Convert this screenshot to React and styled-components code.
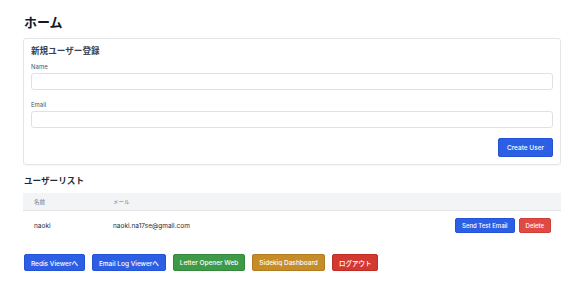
import React from "react";
import styled, { createGlobalStyle } from "styled-components";

const Global = createGlobalStyle`
  html, body { margin: 0; padding: 0; background: #fff; }
  body {
    font-family: "Inter", "Noto Sans CJK JP", sans-serif;
    color: #1f2937;
  }
  * { box-sizing: border-box; }
`;

const Page = styled.div`
  width: 586px;
  padding: 12px 25px 0 23px;
`;

const Title = styled.h1`
  margin: 0 0 6px 1px;
  font-size: 13px;
  line-height: 20px;
  font-weight: 700;
  color: #111827;
`;

const Card = styled.section`
  border: 1px solid #e3e5e8;
  border-radius: 3px;
  padding: 6px 7px 7px 7px;
  box-shadow: 0 1px 1px rgba(0,0,0,0.03);
`;

const CardTitle = styled.h2`
  margin: 0 0 5px 0;
  font-size: 8.6px;
  line-height: 13px;
  font-weight: 700;
  color: #374151;
`;

const Field = styled.div`
  display: flex;
  flex-direction: column;
  gap: 2px;
  margin-bottom: ${(p) => p.$mb || 0}px;
`;

const Label = styled.label`
  font-size: 6px;
  line-height: 8px;
  color: #4b5563;
`;

const Input = styled.input`
  height: 17px;
  width: 100%;
  border: 1px solid #dfe1e5;
  border-radius: 3px;
  padding: 0 5px;
  font-size: 7px;
  outline: none;
  background: #fff;
`;

const Actions = styled.div`
  display: flex;
  justify-content: flex-end;
  margin-top: ${(p) => p.$mt || 0}px;
`;

const colors = {
  blue: ["#2c5fe3", "#2452d6"],
  red: ["#d23a31", "#bf2c24"],
  redLight: ["#e04a45", "#cf3e39"],
  green: ["#3f9a48", "#34883d"],
  amber: ["#c58c27", "#b27b1f"],
};

const Button = styled.button`
  display: inline-flex;
  align-items: center;
  justify-content: center;
  height: ${(p) => p.$h || 17}px;
  padding: 0 ${(p) => p.$px || 6}px;
  font-family: inherit;
  font-size: ${(p) => p.$fs || 6.5}px;
  font-weight: 500;
  color: #fff;
  background: ${(p) => colors[p.$color][0]};
  border: 1px solid ${(p) => colors[p.$color][1]};
  border-radius: 2px;
  white-space: nowrap;
  cursor: pointer;
`;

const SectionTitle = styled.h2`
  margin: 10px 0 5px 1px;
  font-size: 8.6px;
  line-height: 13px;
  font-weight: 700;
  color: #1f2937;
`;

const Table = styled.div`
  width: 100%;
`;

const Row = styled.div`
  display: grid;
  grid-template-columns: 79px 1fr auto;
  align-items: center;
  height: ${(p) => (p.$head ? 18 : 30)}px;
  padding: 0 10px 0 11px;
  background: ${(p) => (p.$head ? "#f3f4f6" : "#fff")};
  border-bottom: 1px solid ${(p) => (p.$head ? "#e2e4e8" : "transparent")};
  font-size: ${(p) => (p.$head ? 5.5 : 6.5)}px;
  color: ${(p) => (p.$head ? "#6b7280" : "#1f2937")};
`;

const RowActions = styled.div`
  display: flex;
  gap: 4px;
`;

const Footer = styled.div`
  display: flex;
  gap: 7px;
  margin-top: 13px;
  padding-left: 1px;
`;

export default function App() {
  return (
    <>
      <Global />
      <Page>
        <Title>ホーム</Title>
        <Card>
          <CardTitle>新規ユーザー登録</CardTitle>
          <Field $mb={11}>
            <Label>Name</Label>
            <Input />
          </Field>
          <Field>
            <Label>Email</Label>
            <Input />
          </Field>
          <Actions $mt={10}>
            <Button $color="blue" $h={19} $px={8} $fs={6.5}>Create User</Button>
          </Actions>
        </Card>
        <SectionTitle>ユーザーリスト</SectionTitle>
        <Table>
          <Row $head>
            <span>名前</span>
            <span>メール</span>
            <span />
          </Row>
          <Row>
            <span>naoki</span>
            <span>naoki.na17se@gmail.com</span>
            <RowActions>
              <Button $color="blue" $h={15} $px={6} $fs={6}>Send Test Email</Button>
              <Button $color="redLight" $h={15} $px={6} $fs={6}>Delete</Button>
            </RowActions>
          </Row>
        </Table>
        <Footer>
          <Button $color="blue">Redis Viewerへ</Button>
          <Button $color="blue">Email Log Viewerへ</Button>
          <Button $color="green">Letter Opener Web</Button>
          <Button $color="amber">Sidekiq Dashboard</Button>
          <Button $color="red">ログアウト</Button>
        </Footer>
      </Page>
    </>
  );
}
